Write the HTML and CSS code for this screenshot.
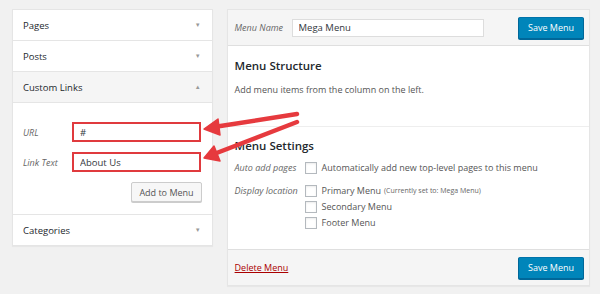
FILE: index.html
```html
<!DOCTYPE html>
<html lang="en">
<head>
    <meta charset="UTF-8">
    <meta name="viewport" content="width=device-width, initial-scale=1.0">
    <title>Menus</title>
    <link rel="stylesheet" href="styles.css">
</head>
<body>
    <div class="screen">
        <div class="side">
            <div class="acc-head">Pages <span class="caret">&#9660;</span></div>
            <div class="acc-head">Posts <span class="caret">&#9660;</span></div>
            <div class="acc-head open">Custom Links <span class="caret">&#9650;</span></div>
            <div class="acc-body">
                <div class="field-row">
                    <label class="field-label">URL</label>
                    <input class="field-input marked" type="text" value="#">
                </div>
                <div class="field-row">
                    <label class="field-label">Link Text</label>
                    <input class="field-input marked" type="text" value="About Us">
                </div>
                <div class="add-row">
                    <button class="btn">Add to Menu</button>
                </div>
            </div>
            <div class="acc-head last">Categories <span class="caret">&#9660;</span></div>
        </div>

        <div class="main">
            <div class="main-head">
                <label class="field-label">Menu Name</label>
                <input class="name-input" type="text" value="Mega Menu">
                <button class="btn primary">Save Menu</button>
            </div>
            <div class="main-body">
                <div class="section structure">
                    <h3>Menu Structure</h3>
                    <p>Add menu items from the column on the left.</p>
                </div>
                <div class="section settings">
                    <h3>Menu Settings</h3>
                    <div class="set-row">
                        <span class="set-label">Auto add pages</span>
                        <div class="set-opts">
                            <label class="check"><span class="box"></span>Automatically add new top-level pages to this menu</label>
                        </div>
                    </div>
                    <div class="set-row">
                        <span class="set-label">Display location</span>
                        <div class="set-opts">
                            <label class="check"><span class="box"></span>Primary Menu <small>(Currently set to: Mega Menu)</small></label>
                            <label class="check"><span class="box"></span>Secondary Menu</label>
                            <label class="check"><span class="box"></span>Footer Menu</label>
                        </div>
                    </div>
                </div>
            </div>
            <div class="main-foot">
                <a class="delete" href="#">Delete Menu</a>
                <button class="btn primary">Save Menu</button>
            </div>
        </div>

        <!-- annotation arrows drawn over the screenshot -->
        <svg class="arrows" width="600" height="294" viewBox="0 0 600 294">
            <g fill="#e63a3e" stroke="#e63a3e" stroke-linecap="round" stroke-linejoin="round">
                <line x1="297" y1="114" x2="214" y2="127" stroke-width="4.5"/>
                <polygon points="204,129 218,119 220,135" stroke-width="1.5"/>
                <line x1="297" y1="122" x2="214" y2="154" stroke-width="4.5"/>
                <polygon points="204,158 214,146 220,161" stroke-width="1.5"/>
            </g>
        </svg>
    </div>
</body>
</html>
```

FILE: styles.css
```css
body {
    margin: 0;
    background: #f1f1f1;
    font-family: "Open Sans", "Noto Sans", sans-serif;
    font-size: 9px;
    color: #444;
}
.screen {
    position: relative;
    display: flex;
    align-items: flex-start;
    gap: 14px;
    padding: 9px 10px 0 12px;
    height: 294px;
    box-sizing: border-box;
}

/* left accordion */
.side {
    width: 200px;
    background: #fff;
    border: 1px solid #e5e5e5;
    box-shadow: 0 1px 1px rgba(0, 0, 0, 0.04);
}
.acc-head {
    height: 31px;
    box-sizing: border-box;
    display: flex;
    align-items: center;
    justify-content: space-between;
    padding: 0 11px 0 10px;
    border-bottom: 1px solid #e5e5e5;
    font-size: 9.5px;
    color: #23282d;
}
.acc-head.open {
    background: #f5f5f5;
}
.acc-head.last {
    height: 30px;
    border-bottom: none;
}
.caret {
    font-size: 6px;
    color: #999;
}
.acc-body {
    padding: 19px 10px 12px 10px;
    border-bottom: 1px solid #e5e5e5;
}
.field-row {
    display: flex;
    align-items: center;
    margin-bottom: 10px;
}
.field-label {
    font-style: italic;
    color: #666;
    font-size: 9px;
}
.field-row .field-label {
    width: 49px;
}
.field-input {
    width: 129px;
    height: 20px;
    box-sizing: border-box;
    font-family: inherit;
    font-size: 9.5px;
    color: #32373c;
    padding: 0 6px;
    background: #fff;
    outline: none;
}
.marked {
    border: 2px solid #e03a3e;
}
.add-row {
    display: flex;
    justify-content: flex-end;
}
.btn {
    height: 20px;
    padding: 0 7px;
    font-family: inherit;
    font-size: 9px;
    color: #555;
    background: #f7f7f7;
    border: 1px solid #ccc;
    border-radius: 2px;
    box-shadow: 0 1px 0 #ccc;
    cursor: pointer;
}
.btn.primary {
    height: 22px;
    padding: 0 9px;
    color: #fff;
    background: #0085ba;
    border-color: #0073aa #006799 #006799;
    box-shadow: 0 1px 0 #006799;
}

/* right editor */
.main {
    width: 364px;
    background: #fff;
    border: 1px solid #e5e5e5;
    box-shadow: 0 1px 1px rgba(0, 0, 0, 0.04);
}
.main-head {
    height: 35px;
    display: flex;
    align-items: center;
    padding: 0 5px 0 7px;
    background: #f5f5f5;
    border-bottom: 1px solid #dfdfdf;
}
.main-head .field-label {
    width: 57px;
}
.name-input {
    width: 192px;
    height: 18px;
    box-sizing: border-box;
    border: 1px solid #ddd;
    font-family: inherit;
    font-size: 9.5px;
    color: #32373c;
    padding: 0 6px;
    outline: none;
}
.main-head .btn {
    margin-left: auto;
}
.main-body {
    height: 203px;
}
.section {
    padding: 0 7px;
}
.section h3 {
    margin: 0;
    font-size: 11.5px;
    font-weight: 600;
    color: #23282d;
}
.structure {
    padding-top: 12px;
    height: 68px;
    border-bottom: 1px solid #eee;
}
.structure p {
    margin: 10px 0 0;
    color: #555;
}
.settings {
    padding-top: 11px;
}
.set-row {
    display: flex;
    align-items: flex-start;
    margin-top: 9px;
}
.set-row + .set-row {
    margin-top: 11px;
}
.set-label {
    width: 70px;
    font-style: italic;
    color: #666;
    line-height: 12px;
}
.set-opts {
    display: flex;
    flex-direction: column;
    gap: 4px;
}
.check {
    display: flex;
    align-items: center;
    line-height: 12px;
    color: #555;
}
.check small {
    font-size: 7px;
    margin-left: 3px;
    color: #666;
}
.box {
    width: 10px;
    height: 10px;
    border: 1px solid #b4b9be;
    background: #fff;
    margin-right: 5px;
    box-shadow: inset 0 1px 2px rgba(0, 0, 0, 0.08);
}
.main-foot {
    height: 35px;
    display: flex;
    align-items: center;
    justify-content: space-between;
    padding: 0 5px 0 7px;
    background: #f5f5f5;
    border-top: 1px solid #dfdfdf;
}
.delete {
    color: #a00;
    font-size: 9px;
}

.arrows {
    position: absolute;
    left: 0;
    top: 0;
    pointer-events: none;
}
```
